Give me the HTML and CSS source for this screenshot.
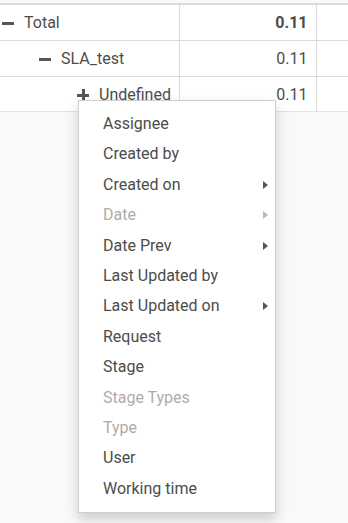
FILE: index.html
```html
<!DOCTYPE html>
<html lang="en">
<head>
  <meta charset="UTF-8">
  <title>Pivot</title>
  <link rel="stylesheet" href="styles.css">
</head>
<body>

  <div class="pivot">
    <table class="pivot-table">
      <colgroup>
        <col class="col-head">
        <col class="col-num">
        <col>
      </colgroup>
      <tr>
        <td class="head lvl0"><span class="toggle minus"></span>Total</td>
        <td class="num total">0.11</td>
        <td class="last"></td>
      </tr>
      <tr>
        <td class="head lvl1"><span class="toggle minus"></span>SLA_test</td>
        <td class="num">0.11</td>
        <td class="last"></td>
      </tr>
      <tr>
        <td class="head lvl2"><span class="toggle plus"></span>Undefined</td>
        <td class="num">0.11</td>
        <td class="last"></td>
      </tr>
    </table>

    <!-- menu des groupes -->
    <ul class="group-menu">
      <li>Assignee</li>
      <li>Created by</li>
      <li class="sub">Created on</li>
      <li class="sub disabled">Date</li>
      <li class="sub">Date Prev</li>
      <li>Last Updated by</li>
      <li class="sub">Last Updated on</li>
      <li>Request</li>
      <li>Stage</li>
      <li class="disabled">Stage Types</li>
      <li class="disabled">Type</li>
      <li>User</li>
      <li>Working time</li>
    </ul>
  </div>

</body>
</html>
```

FILE: styles.css
```css
body {
  font-family: Roboto, 'Liberation Sans', sans-serif;
  margin: 0;
  background-color: #f9f9f9;
  color: #4c4c4c;
  width: 348px;
  height: 523px;
  overflow: hidden;
}

.pivot {
  position: relative;
  padding-top: 3px;
}

.pivot-table {
  width: 100%;
  table-layout: fixed;
  border-collapse: collapse;
  background: white;
  border-top: 2px solid #dcdcdc;
  border-bottom: 1px solid #e2e2e2;
  font-size: 16px;
}

.col-head { width: 179px; }
.col-num { width: 137px; }

.pivot-table td {
  height: 35px;
  padding: 0;
  border-bottom: 1px solid #dcdcdc;
  border-right: 1px solid #dcdcdc;
  white-space: nowrap;
}

.pivot-table tr:last-child td {
  border-bottom: none;
  height: 34px;
}

.lvl0 { padding-left: 2px !important; }
.lvl1 { padding-left: 39px !important; }
.lvl2 { padding-left: 77px !important; }

.toggle {
  display: inline-block;
  position: relative;
  width: 12px;
  height: 12px;
  margin-right: 10px;
  vertical-align: -1px;
}

.toggle::before {
  content: "";
  position: absolute;
  left: 0;
  top: 5px;
  width: 12px;
  height: 3px;
  background: #555;
}

.toggle.plus::after {
  content: "";
  position: absolute;
  left: 4.5px;
  top: 0;
  width: 3px;
  height: 12px;
  background: #555;
}

.num {
  text-align: right;
  padding-right: 8px !important;
}

.total {
  font-weight: bold;
}

.last {
  border-right: none !important;
}

.group-menu {
  position: absolute;
  left: 78px;
  top: 100px;
  width: 196px;
  margin: 0;
  padding: 8px 0;
  list-style: none;
  background: white;
  border: 1px solid #cfcfcf;
  box-shadow: 0 6px 12px rgba(0,0,0,0.18);
  font-size: 16px;
}

.group-menu li {
  height: 30.4px;
  line-height: 30px;
  padding-left: 24px;
  position: relative;
  color: #4c4c4c;
}

.group-menu li.disabled {
  color: #b3aaa8;
}

.group-menu li.sub::after {
  content: "";
  position: absolute;
  right: 7px;
  top: 11px;
  border-left: 5px solid #555;
  border-top: 4px solid transparent;
  border-bottom: 4px solid transparent;
}

.group-menu li.disabled::after {
  border-left-color: #b9b9b9;
}
```
